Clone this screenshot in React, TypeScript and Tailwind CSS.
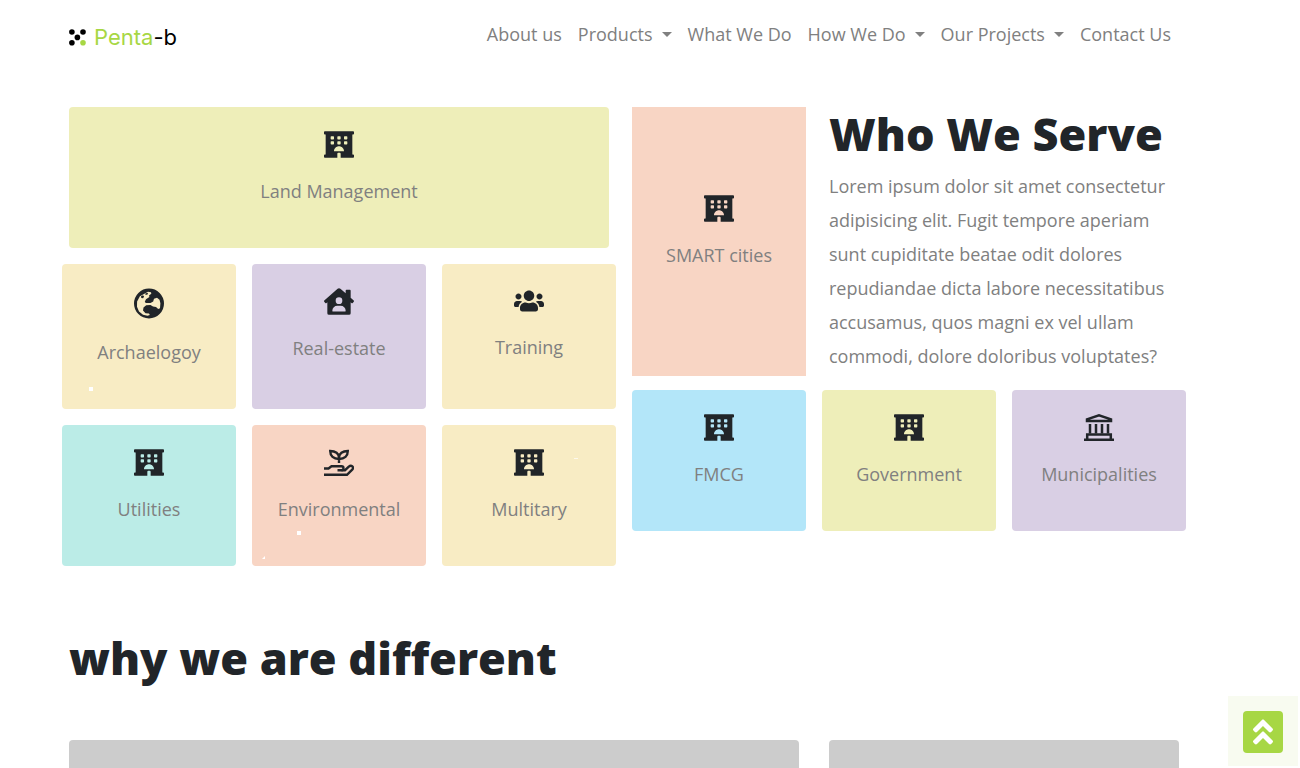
import type { ReactNode } from 'react';
import { FaHotel, FaHouseUser, FaUsers, FaAngleDoubleUp } from 'react-icons/fa';

const navItems = [
  { label: 'About us' },
  { label: 'Products', menu: true },
  { label: 'What We Do' },
  { label: 'How We Do', menu: true },
  { label: 'Our Projects', menu: true },
  { label: 'Contact Us' },
];

function Logo() {
  return (
    <a href="#" aria-label="Penta-b" className="flex items-center gap-2">
      <svg viewBox="0 0 17 17" className="h-[17px] w-[17px]" aria-hidden="true">
        <circle cx="2.9" cy="3" r="2.8" />
        <circle cx="14" cy="3" r="2.8" />
        <circle cx="8.4" cy="8.4" r="2.8" />
        <circle cx="2.9" cy="13.8" r="2.8" />
        <circle cx="14" cy="13.8" r="2.8" fill="#a7d744" />
      </svg>
      <span className="font-['Inter',sans-serif] text-[22px] leading-[30px] font-normal text-black">
        <span className="text-[#a7d744]">Penta</span>-b
      </span>
    </a>
  );
}

function Hotel() {
  return <FaHotel className="h-[27px] w-[30px]" />;
}

function Globe() {
  return (
    <svg viewBox="0 0 30 30" className="h-[31px] w-[30px]" fill="currentColor" fillRule="evenodd">
      <path d="M15 0a15 15 0 1 0 0 30a15 15 0 0 0 0-30z M14 3.300l3 .4 .3 1.500-2.300 1.800 .4 1.500-3.400 2.200-1.200 2.600 1 1.200 4.700-.1 2.700-1.300 .8-2.900 3-.9 2.500 2 .9 3.500-.4 5-1.800.8-2.200-2.100-3-.4-2.500-1.700-4.300.3-2.700 2.200-.5 3.200 2.500 2.700 3.500.3 .8 1.500-2.300.7-4.500-1-4-3.400-2-4.600 .1-5.300 2.800-5.300z M9 6.800l-2 1 .3 1.700 1.800.2 1-1.600z M13.300 4.300l-1.800.6-.2 1.400 1.800-.1 1-1z" />
    </svg>
  );
}

function HandPlant() {
  return (
    <svg viewBox="0 0 30 27" className="h-[27px] w-[30px]" fill="none" stroke="currentColor" strokeWidth="2.4">
      <path d="M15 14V8.500C15 4.500 11.500 2 6.200 2c0 5 3.300 8 8.800 8S23.800 7 23.800 2c-5.300 0-8.800 2.500-8.800 6.500" />
      <path d="M0 19.500h4.500l3-2.200H17.500a2 2 0 0 1 2 2c0 1.400-.8 1.900-2 1.900H13.500" />
      <path d="M17.500 21.200H21l3.800-3.500c2.600-2.200 5.700.5 3.400 3L23 25.800H0" />
    </svg>
  );
}

function Bank() {
  return (
    <svg viewBox="0 0 30 27" className="h-[27px] w-[30px]" fill="none" stroke="currentColor" strokeWidth="2.5">
      <path d="M3 7V5.300L15 1.300l12 4V7z" />
      <path d="M6 10v9.500M12 10v9.500M18 10v9.500M24 10v9.500" />
      <path d="M3.200 26V20.500h23.600V26M0 25.750h30" />
    </svg>
  );
}

function Tile({ label, icon, color, className = 'rounded' }: { label: string; icon: ReactNode; color: string; className?: string }) {
  return (
    <article className={`flex flex-col items-center px-4 pt-6 pb-10 text-[#212529] ${color} ${className}`}>
      {icon}
      <h3 className="mt-4 text-center text-lg leading-[34px] text-[#808080]">{label}</h3>
    </article>
  );
}

export default function App() {
  return (
    <div className="relative flex min-h-screen flex-col overflow-hidden bg-white pr-[52px] font-['Open_Sans',sans-serif] text-[#212529]">
      <header className="mx-auto flex w-full max-w-[1140px] items-start justify-between px-[15px] pt-4">
        <div className="pt-[6px]"><Logo /></div>
        <nav className="flex gap-4 pr-2 text-lg leading-9 text-[#808080]">
          {navItems.map((item) => (
            <a key={item.label} href="#" className="flex items-center gap-[9px] whitespace-nowrap">
              {item.label}
              {item.menu && <span className="border-x-5 border-t-5 border-x-transparent border-t-current" />}
            </a>
          ))}
        </nav>
      </header>

      <main className="mx-auto flex w-full max-w-[1140px] flex-1 flex-col pt-[55px]">
        <section className="grid grid-cols-2 items-start">
          <div className="relative flex flex-col gap-4">
            <Tile label="Land Management" icon={<Hotel />} color="bg-[#eeeeb9]" className="mx-[15px] rounded" />
            <div className="grid grid-cols-3 gap-4 px-2">
              <Tile label="Archaelogoy" icon={<Globe />} color="bg-[#f8ecc4]" />
              <Tile label="Real-estate" icon={<FaHouseUser className="h-[27px] w-[30px]" />} color="bg-[#d9cfe4]" />
              <Tile label="Training" icon={<FaUsers className="h-[26px] w-[30px]" />} color="bg-[#f8ecc4]" />
              <Tile label="Utilities" icon={<Hotel />} color="bg-[#bbece7]" />
              <Tile label="Environmental" icon={<HandPlant />} color="bg-[#f8d5c4]" />
              <Tile label="Multitary" icon={<Hotel />} color="bg-[#f8ecc4]" />
            </div>
            <span className="absolute top-[280px] left-[35px] size-1 bg-white" />
            <span className="absolute top-[424px] left-[243px] size-1 bg-white" />
            <span className="absolute top-[449px] left-[208px] size-[3px] bg-white [clip-path:polygon(100%_0,100%_100%,0_100%)]" />
            <span className="absolute top-[351px] left-[520px] h-px w-1 bg-white/70" />
          </div>

          <div className="flex flex-col gap-[14px] px-2">
            <div className="grid grid-cols-3 gap-4">
              <Tile label="SMART cities" icon={<Hotel />} color="bg-[#f8d5c4]" className="justify-center" />
              <div className="col-span-2 pl-[7px]">
                <h1 className="text-[45px] leading-[54px] font-extrabold">Who We Serve</h1>
                <p className="mt-2 pb-[3px] text-lg leading-[34px] text-[#808080]">
                  Lorem ipsum dolor sit amet consectetur adipisicing elit. Fugit tempore aperiam sunt cupiditate beatae
                  odit dolores repudiandae dicta labore necessitatibus accusamus, quos magni ex vel ullam commodi, dolore
                  doloribus voluptates?
                </p>
              </div>
            </div>
            <div className="grid grid-cols-3 gap-4">
              <Tile label="FMCG" icon={<Hotel />} color="bg-[#b3e6f9]" />
              <Tile label="Government" icon={<Hotel />} color="bg-[#eeeeb9]" />
              <Tile label="Municipalities" icon={<Bank />} color="bg-[#d9cfe4]" />
            </div>
          </div>
        </section>

        <section className="flex flex-1 flex-col px-[15px] pt-[65px]">
          <h2 className="text-[45px] leading-[54px] font-extrabold">why we are different</h2>
          <div className="mt-[55px] grid min-h-7 flex-1 grid-cols-[730fr_350fr] gap-[30px]">
            <div className="rounded-t bg-[#ccc]" />
            <div className="rounded-t bg-[#ccc]" />
          </div>
        </section>
      </main>

      <div className="fixed right-[2px] bottom-[2px] flex size-[70px] items-start justify-center bg-[#f8fbf0] pt-[15px]">
        <button type="button" aria-label="Back to top" className="flex h-[42px] w-10 items-center justify-center rounded bg-[#a7d744] text-white">
          <FaAngleDoubleUp className="size-8" />
        </button>
      </div>
    </div>
  );
}
